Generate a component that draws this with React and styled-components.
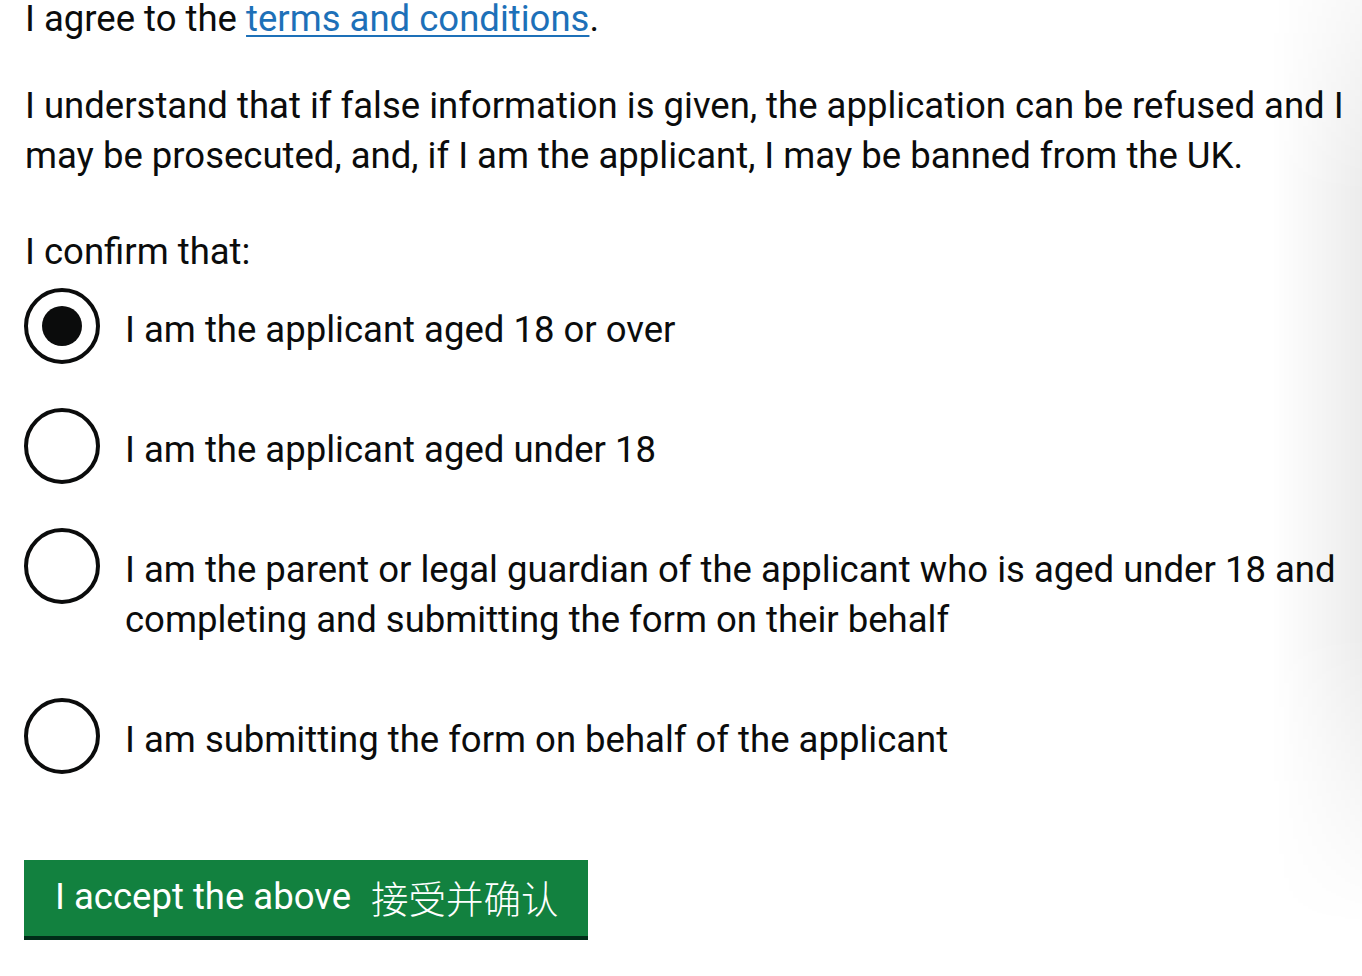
import React from 'react';
import styled, { createGlobalStyle } from 'styled-components';

const Global = createGlobalStyle`
  html, body { margin: 0; padding: 0; background: #ffffff; }
  body {
    font-family: Roboto, "Noto Sans CJK SC", sans-serif;
    color: #0b0c0c;
    overflow: hidden;
  }
`;

const Page = styled.main`
  box-sizing: border-box;
  width: 1362px;
  height: 976px;
  overflow: hidden;
  padding: 0 10px 0 25px;
`;

const Scroller = styled.div`
  margin-top: -6px;
`;

const Para = styled.p`
  margin: 0 0 ${p => p.$gap}px;
  font-size: 36.5px;
  line-height: 50px;
  font-weight: 400;
`;

const Link = styled.a`
  color: #1d70b8;
  text-decoration: underline;
  text-decoration-thickness: 2px;
  text-underline-offset: 4px;
`;

const Fieldset = styled.fieldset`
  border: 0;
  margin: 0;
  padding: 0;
`;

const Legend = styled.legend`
  padding: 0;
  margin: 0 0 11px;
  font-size: 36.5px;
  line-height: 50px;
`;

const RadioList = styled.div`
  display: flex;
  flex-direction: column;
  gap: 40px;
  margin-left: -1px;
`;

const RadioItem = styled.label`
  display: flex;
  align-items: flex-start;
  gap: 25px;
  cursor: pointer;
`;

const Circle = styled.span`
  box-sizing: border-box;
  flex: none;
  width: 76px;
  height: 76px;
  border: 4px solid #0b0c0c;
  border-radius: 50%;
  display: flex;
  align-items: center;
  justify-content: center;
`;

const Dot = styled.span`
  width: 40px;
  height: 40px;
  border-radius: 50%;
  background: #0b0c0c;
`;

const LabelText = styled.span`
  padding: 17px 0 13px;
  font-size: 36.5px;
  line-height: 50px;
`;

const Button = styled.button`
  box-sizing: border-box;
  display: flex;
  align-items: center;
  gap: 20px;
  margin-top: 82px;
  margin-left: -1px;
  width: 564px;
  height: 76px;
  border: 0;
  border-radius: 0;
  background: #12813f;
  box-shadow: 0 4px 0 #002d18;
  color: #ffffff;
  font-family: Roboto, "Noto Sans CJK SC", sans-serif;
  font-size: 36.5px;
  line-height: 50px;
  text-align: left;
  padding: 0 0 2px 31px;
  cursor: pointer;
`;

const Cjk = styled.span`
  font-family: "Noto Sans CJK SC", sans-serif;
  font-size: 37.5px;
  font-weight: 300;
  letter-spacing: 0;
`;

const EdgeShade = styled.div`
  position: fixed;
  top: 0;
  right: 0;
  width: 90px;
  height: 100%;
  pointer-events: none;
  background: linear-gradient(to right, rgba(0, 0, 0, 0), rgba(0, 0, 0, 0.075));
  -webkit-mask-image: linear-gradient(to bottom, rgba(0,0,0,0.4) 0%, #000 20%, #000 65%, transparent 95%);
  mask-image: linear-gradient(to bottom, rgba(0,0,0,0.4) 0%, #000 20%, #000 65%, transparent 95%);
`;

const options = [
  { text: 'I am the applicant aged 18 or over', checked: true },
  { text: 'I am the applicant aged under 18' },
  { text: 'I am the parent or legal guardian of the applicant who is aged under 18 and completing and submitting the form on their behalf' },
  { text: 'I am submitting the form on behalf of the applicant' },
];

export default function App() {
  return (
    <>
      <Global />
      <Page>
        <Scroller>
          <Para $gap={37}>
            I agree to the <Link href="#">terms and conditions</Link>.
          </Para>
          <Para $gap={46}>
            I understand that if false information is given, the application can be refused and I may be
            prosecuted, and, if I am the applicant, I may be banned from the UK.
          </Para>
          <Fieldset>
            <Legend>I confirm that:</Legend>
            <RadioList role="radiogroup">
              {options.map((o) => (
                <RadioItem key={o.text} role="radio" aria-checked={!!o.checked}>
                  <Circle>{o.checked && <Dot />}</Circle>
                  <LabelText>{o.text}</LabelText>
                </RadioItem>
              ))}
            </RadioList>
          </Fieldset>
          <Button type="button">
            <span>I accept the above</span>
            <Cjk>接受并确认</Cjk>
          </Button>
        </Scroller>
      </Page>
      <EdgeShade />
    </>
  );
}
